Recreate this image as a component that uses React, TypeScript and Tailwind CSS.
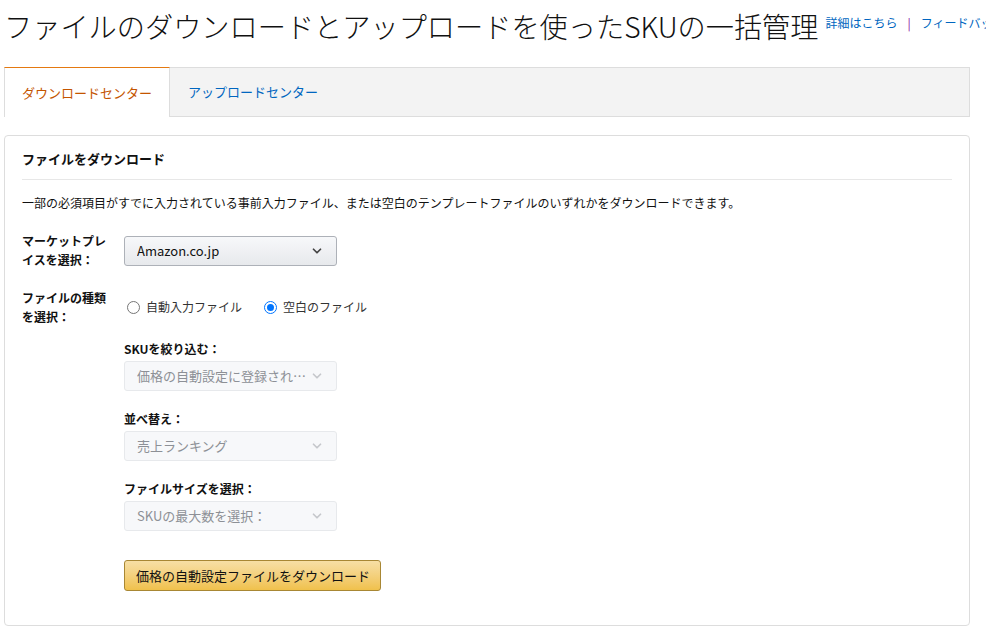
import { ChevronDown } from "lucide-react";

const font = "font-['Noto_Sans_CJK_JP','Noto_Sans',sans-serif]";

const Select = ({ value, disabled }: { value: string; disabled?: boolean }) => (
    <div
        className={
            disabled
                ? "flex items-center justify-between w-[213px] h-[30px] px-3 rounded-[3px] border border-[#e7e9ec] bg-[#f7f8fa] text-[13px] text-[#8d9096]"
                : "flex items-center justify-between w-[213px] h-[30px] px-3 rounded-[3px] border border-[#adb1b8] bg-gradient-to-b from-[#f7f8fa] to-[#e7e9ec] text-[13px] text-[#111]"
        }
    >
        <span className="truncate">{value}</span>
        <ChevronDown
            size={14}
            strokeWidth={3}
            className={disabled ? "text-[#c6c8cc] shrink-0" : "text-[#444] shrink-0"}
        />
    </div>
);

const Radio = ({ label, checked }: { label: string; checked?: boolean }) => (
    <label className="flex items-center gap-[6px] text-[12px] text-[#333]">
        {checked ? (
            <span className="w-[13px] h-[13px] rounded-full border border-[#0075ff] flex items-center justify-center">
                <span className="w-[7px] h-[7px] rounded-full bg-[#0075ff]" />
            </span>
        ) : (
            <span className="w-[13px] h-[13px] rounded-full border border-[#767676] bg-white" />
        )}
        {label}
    </label>
);

const Field = ({ label, value }: { label: string; value: string }) => (
    <div className="flex flex-col gap-[4px]">
        <div className="text-[12px] font-bold text-[#111] leading-[17px]">{label}</div>
        <Select value={value} disabled />
    </div>
);

export default function App() {
    return (
        <div className={`${font} w-[986px] h-[636px] overflow-hidden bg-white`}>
            <div className="w-[966px] ml-[4px]">
                <div className="flex items-start h-[54px] pt-[8px] whitespace-nowrap">
                    <h1 className="text-[28.2px] leading-[36px] font-light text-[#111]">
                        ファイルのダウンロードとアップロードを使ったSKUの一括管理
                    </h1>
                    <div className="flex items-center ml-[7px] mt-[6px] text-[12px] text-[#0066c0]">
                        <span>詳細はこちら</span>
                        <span className="mx-[10px] text-[#8a0a9a]">|</span>
                        <span>フィードバック</span>
                    </div>
                </div>

                <div className="mt-[13px] flex h-[50px] bg-[#f3f3f3] border border-[#dddddd] text-[13px]">
                    <div className="flex items-center px-[17px] bg-white border-t border-t-[#e47911] -mt-px -ml-px border-l border-l-[#dddddd] border-r border-r-[#dddddd] h-[50px] text-[#c45500]">
                        ダウンロードセンター
                    </div>
                    <div className="flex items-center px-[18px] text-[#0066c0]">アップロードセンター</div>
                </div>

                <div className="mt-[18px] h-[491px] border border-[#dddddd] rounded-[4px] px-[17px]">
                    <div className="pt-[13px] pb-[11px] text-[13px] font-bold leading-[19px] text-[#111]">
                        ファイルをダウンロード
                    </div>
                    <div className="border-t border-[#e7e7e7]" />
                    <p className="mt-[14px] text-[12px] leading-[17px] text-[#111]">
                        一部の必須項目がすでに入力されている事前入力ファイル、または空白のテンプレートファイルのいずれかをダウンロードできます。
                    </p>

                    <div className="mt-[20px] flex">
                        <div className="w-[102px] shrink-0 text-[12px] font-bold leading-[19px] text-[#111]">
                            <div className="w-[90px]">マーケットプレイスを選択：</div>
                        </div>
                        <div className="mt-[5px]">
                            <Select value="Amazon.co.jp" />
                        </div>
                    </div>

                    <div className="mt-[19px] flex">
                        <div className="w-[102px] shrink-0 text-[12px] font-bold leading-[19px] text-[#111]">
                            <div className="w-[90px]">ファイルの種類を選択：</div>
                        </div>
                        <div className="flex flex-col">
                            <div className="flex items-center gap-[22px] pl-[3px] h-[20px] mt-[9px]">
                                <Radio label="自動入力ファイル" />
                                <Radio label="空白のファイル" checked />
                            </div>
                            <div className="mt-[23px] flex flex-col gap-[19px]">
                                <Field label="SKUを絞り込む：" value="価格の自動設定に登録され…" />
                                <Field label="並べ替え：" value="売上ランキング" />
                                <Field label="ファイルサイズを選択：" value="SKUの最大数を選択：" />
                            </div>
                            <button className="mt-[29px] w-[257px] h-[31px] rounded-[3px] border border-[#a88734] bg-gradient-to-b from-[#f7dfa5] to-[#f0c14b] text-[13px] text-[#111] text-left pl-[11px]">
                                価格の自動設定ファイルをダウンロード
                            </button>
                        </div>
                    </div>
                </div>
            </div>
        </div>
    );
}
